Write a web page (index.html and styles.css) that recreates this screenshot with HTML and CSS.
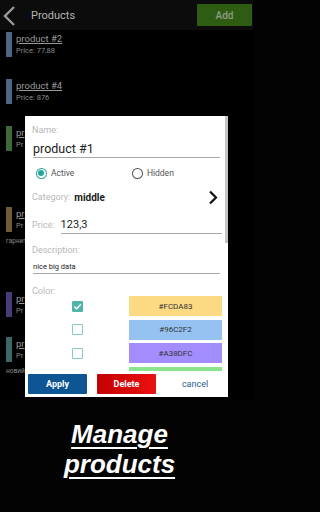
FILE: index.html
```html
<!DOCTYPE html>
<html>
<head>
<meta charset="utf-8">
<link rel="stylesheet" href="styles.css">
</head>
<body>
<div class="phone">
  <div class="topbar">
    <svg class="back" width="14" height="22" viewBox="0 0 14 22"><polyline points="11,2 2,11 11,20" fill="none" stroke="#9a9a9a" stroke-width="2.4"/></svg>
    <span class="title">Products</span>
    <span class="add">Add</span>
  </div>
  <div class="list">
    <div class="item i1"><div class="row"><span class="bar" style="background:#4f6584"></span><div class="txt"><span class="name">product #2</span><span class="price">Price: 77,88</span></div></div></div>
    <div class="item i2"><div class="row"><span class="bar" style="background:#4f6584"></span><div class="txt"><span class="name">product #4</span><span class="price">Price: 876</span></div></div></div>
    <div class="item i3"><div class="row"><span class="bar" style="background:#3d6a38"></span><div class="txt"><span class="name">pr</span><span class="price">Pr</span></div></div></div>
    <div class="item i4"><div class="row"><span class="bar" style="background:#6e5d34"></span><div class="txt"><span class="name">pr</span><span class="price">Pr</span></div></div><div class="desc">гарнитура</div></div>
    <div class="item i5"><div class="row"><span class="bar" style="background:#493a7a"></span><div class="txt"><span class="name">pr</span><span class="price">Pr</span></div></div></div>
    <div class="item i6"><div class="row"><span class="bar" style="background:#3b6767"></span><div class="txt"><span class="name">pr</span><span class="price">Pr</span></div></div><div class="desc">новий</div></div>
  </div>

  <div class="dialog">
    <div class="scrollbar"></div>
    <div class="label l-name">Name:</div>
    <div class="input name-input">product #1</div>
    <div class="radios">
      <span class="radio on"><span class="dot"></span></span><span class="rtext">Active</span>
      <span class="radio off"></span><span class="rtext">Hidden</span>
    </div>
    <div class="category">
      <span class="label">Category:</span><span class="cat">middle</span>
      <svg class="chev" width="10" height="15" viewBox="0 0 10 15"><polyline points="2,1.5 8,7.5 2,13.5" fill="none" stroke="#111" stroke-width="2.2"/></svg>
    </div>
    <div class="price-row">
      <span class="label">Price:</span><span class="input price-input">123,3</span>
    </div>
    <div class="label l-desc">Description:</div>
    <div class="input desc-input">nice big data</div>
    <div class="label l-color">Color:</div>
    <div class="colors">
      <div class="crow"><span class="cbcell"><span class="cb checked"><svg width="9" height="9" viewBox="0 0 9 9"><polyline points="1.3,4.6 3.6,6.8 7.8,2.2" fill="none" stroke="#fff" stroke-width="1.4"/></svg></span></span><span class="swatch" style="background:#FCDA83">#FCDA83</span></div>
      <div class="crow"><span class="cbcell"><span class="cb"></span></span><span class="swatch" style="background:#96C2F2">#96C2F2</span></div>
      <div class="crow"><span class="cbcell"><span class="cb"></span></span><span class="swatch" style="background:#A38DFC">#A38DFC</span></div>
      <div class="crow"><span class="cbcell"><span class="cb"></span></span><span class="swatch" style="background:#8BE38B"></span></div>
    </div>
    <div class="buttons">
      <span class="btn apply">Apply</span>
      <span class="btn delete">Delete</span>
      <span class="cancel">cancel</span>
    </div>
  </div>
</div>
<div class="caption">
  <span>Manage</span><br><span>products</span>
</div>
</body>
</html>
```

FILE: styles.css
```css
html, body {
  margin: 0;
  padding: 0;
  background: #030303;
}
body {
  width: 253px;
  height: 512px;
  overflow: hidden;
  font-family: Roboto, "Liberation Sans", sans-serif;
}
.phone {
  position: relative;
  height: 400px;
  background: #000;
}
.topbar {
  height: 30px;
  background: #0c0c0c;
  display: flex;
  align-items: center;
  padding-left: 3px;
}
.back {
  margin-top: 1px;
}
.title {
  margin-left: 14px;
  font-size: 11px;
  color: #b4b4b4;
}
.add {
  margin-left: auto;
  margin-right: 1px;
  width: 55px;
  height: 22px;
  background: #2e5c13;
  border-radius: 1px;
  color: #8d9c84;
  font-size: 10px;
  font-weight: 500;
  display: flex;
  align-items: center;
  justify-content: center;
}
.list {
  padding-top: 2px;
  padding-left: 6px;
}
.item {
  margin-bottom: 22px;
}
.i3 { margin-bottom: 56px; }
.i4 { margin-bottom: 46px; }
.i5 { margin-bottom: 20px; }
.row {
  display: flex;
  height: 25px;
}
.bar {
  width: 6px;
  height: 25px;
}
.txt {
  margin-left: 4px;
  display: flex;
  flex-direction: column;
}
.name {
  font-size: 9.5px;
  line-height: 13px;
  color: #9a9a9a;
  text-decoration: underline;
}
.price {
  font-size: 7.5px;
  line-height: 12px;
  color: #8a8a8a;
}
.desc {
  font-size: 6.5px;
  line-height: 10px;
  margin-top: 4px;
  color: #8a8a8a;
}

.dialog {
  position: absolute;
  left: 25px;
  top: 116px;
  width: 203px;
  height: 281px;
  background: #fff;
  box-sizing: border-box;
  padding: 8px 0 0 7px;
  overflow: hidden;
}
.scrollbar {
  position: absolute;
  right: 0;
  top: 0;
  width: 3px;
  height: 127px;
  background: #c4c4c4;
}
.label {
  font-size: 9px;
  line-height: 12px;
  color: #b8b8b8;
}
.input {
  color: #222;
  border-bottom: 1px solid #a8a8a8;
}
.name-input {
  margin-top: 4px;
  margin-left: 1px;
  width: 187px;
  height: 17px;
  font-size: 12.5px;
  line-height: 17px;
}
.radios {
  margin-top: 8px;
  height: 14px;
  display: flex;
  align-items: center;
  padding-left: 4px;
}
.radio {
  width: 11px;
  height: 11px;
  box-sizing: border-box;
  border-radius: 50%;
  display: flex;
  align-items: center;
  justify-content: center;
}
.radio.on {
  border: 1.5px solid #26a69a;
}
.radio.on .dot {
  width: 6px;
  height: 6px;
  border-radius: 50%;
  background: #26a69a;
}
.radio.off {
  border: 1.2px solid #555;
}
.rtext {
  font-size: 8.5px;
  color: #555;
  margin-left: 4px;
  width: 82px;
}
.category {
  margin-top: 9px;
  height: 16px;
  display: flex;
  align-items: center;
}
.cat {
  margin-left: 4px;
  font-size: 10px;
  font-weight: bold;
  color: #1a1a1a;
}
.chev {
  margin-left: auto;
  margin-right: 10px;
}
.price-row {
  margin-top: 11px;
  display: flex;
  align-items: flex-end;
}
.price-row .label {
  line-height: 17px;
}
.price-input {
  margin-left: 6px;
  width: 161px;
  height: 17px;
  font-size: 11px;
  line-height: 17px;
}
.l-desc {
  margin-top: 10px;
}
.desc-input {
  margin-top: 4px;
  margin-left: 1px;
  width: 187px;
  height: 13px;
  font-size: 7.5px;
  line-height: 13px;
}
.l-color {
  margin-top: 12px;
  line-height: 10px;
}
.colors {
  height: 75px;
  overflow: hidden;
  display: flex;
  flex-direction: column;
  gap: 3.6px;
  margin-left: -7px;
}
.crow {
  display: flex;
  height: 20px;
  flex-shrink: 0;
  align-items: center;
}
.cbcell {
  width: 104px;
  display: flex;
  justify-content: center;
}
.cb {
  width: 11px;
  height: 11px;
  box-sizing: border-box;
  border: 1.5px solid #7fcac2;
  border-radius: 1px;
  display: flex;
  align-items: center;
  justify-content: center;
}
.cb.checked {
  background: #52b3a9;
  border-color: #52b3a9;
}
.swatch {
  width: 93px;
  height: 20px;
  font-size: 8px;
  color: #333;
  display: flex;
  align-items: center;
  justify-content: center;
}
.buttons {
  margin-top: 3px;
  margin-left: -4px;
  display: flex;
  align-items: center;
  height: 20px;
}
.btn {
  width: 59px;
  height: 20px;
  display: flex;
  align-items: center;
  justify-content: center;
  color: #fff;
  font-weight: bold;
  font-size: 9px;
  border-radius: 1px;
}
.apply {
  background: #0e5593;
}
.delete {
  margin-left: 10px;
  background: linear-gradient(90deg, #c40000, #ea1212);
}
.cancel {
  flex: 1;
  text-align: center;
  padding-left: 6px;
  font-size: 9px;
  color: #2b5f8c;
}
.caption {
  margin-top: 19px;
  padding-right: 14px;
  text-align: center;
  font-family: "Liberation Sans", Arial, sans-serif;
  font-weight: bold;
  font-style: italic;
  font-size: 26px;
  line-height: 30px;
  color: #fff;
}
.caption span {
  text-decoration: underline;
  text-decoration-thickness: 2px;
  text-underline-offset: 4px;
}
```
